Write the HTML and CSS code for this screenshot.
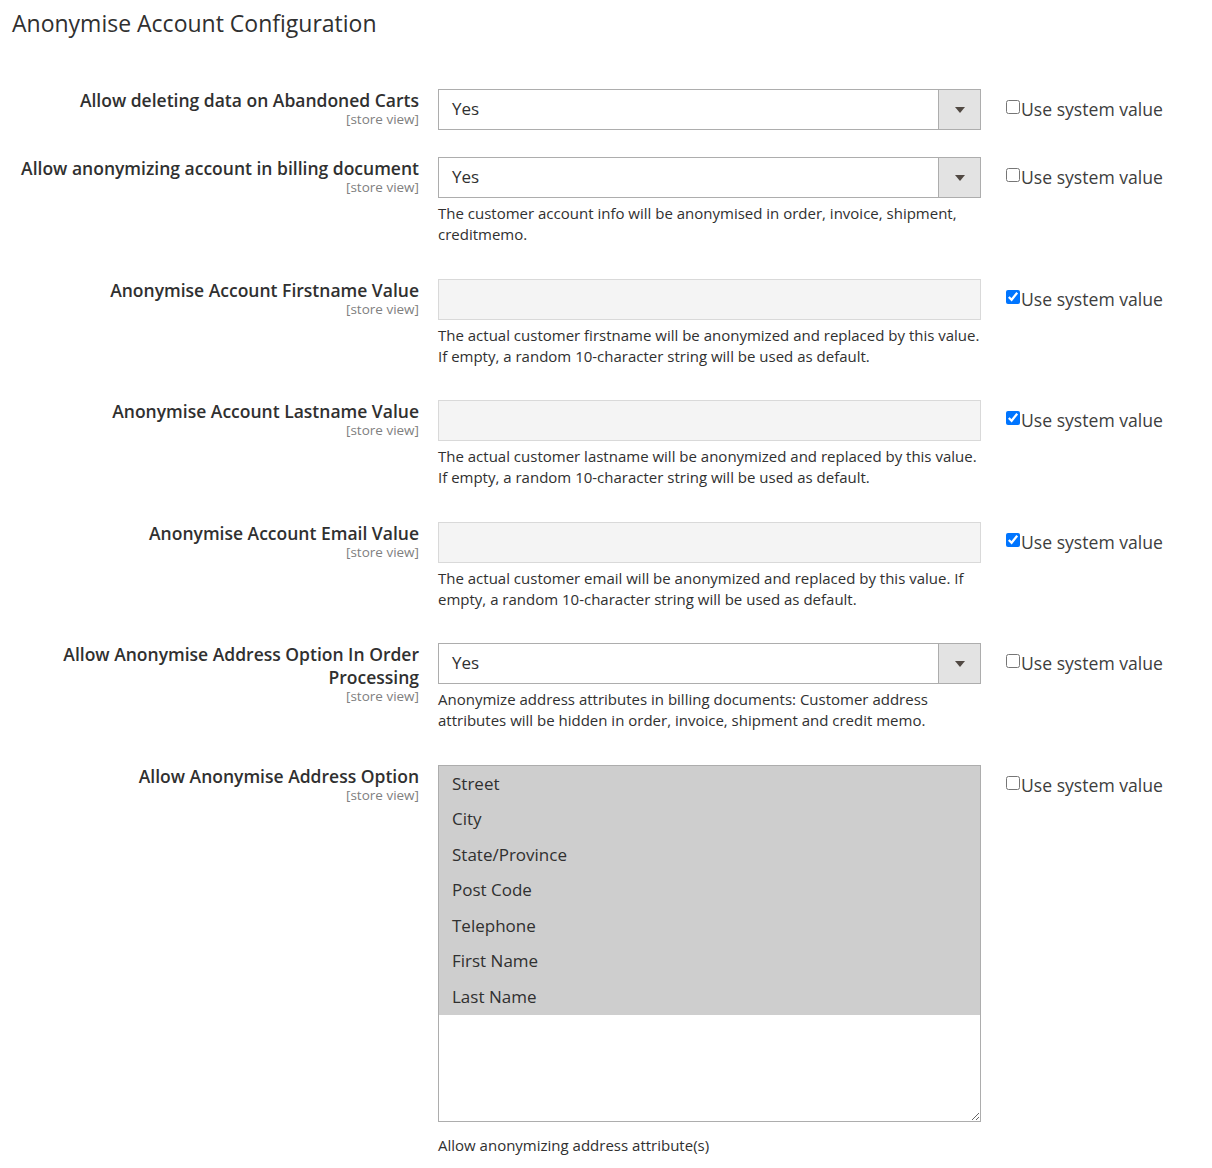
FILE: index.html
```html
<!DOCTYPE html>
<html lang="en">
<head>
  <meta charset="UTF-8" />
  <title>Anonymise Account Configuration</title>
  <link rel="stylesheet" href="styles.css">
</head>
<body>
  <div class="section">
    <h2 class="section-title">Anonymise Account Configuration</h2>

    <div class="row">
      <div class="label">
        <span>Allow deleting data on Abandoned Carts</span>
        <span class="scope">[store view]</span>
      </div>
      <div class="value">
        <div class="select"><span class="select-text">Yes</span><span class="select-arrow"></span></div>
      </div>
      <label class="use-default"><input type="checkbox" />Use system value</label>
    </div>

    <div class="row">
      <div class="label">
        <span>Allow anonymizing account in billing document</span>
        <span class="scope">[store view]</span>
      </div>
      <div class="value">
        <div class="select"><span class="select-text">Yes</span><span class="select-arrow"></span></div>
        <p class="note">The customer account info will be anonymised in order, invoice, shipment, creditmemo.</p>
      </div>
      <label class="use-default"><input type="checkbox" />Use system value</label>
    </div>

    <div class="row">
      <div class="label">
        <span>Anonymise Account Firstname Value</span>
        <span class="scope">[store view]</span>
      </div>
      <div class="value">
        <input class="text-input" type="text" disabled />
        <p class="note">The actual customer firstname will be anonymized and replaced by this value. If empty, a random 10-character string will be used as default.</p>
      </div>
      <label class="use-default"><input type="checkbox" checked />Use system value</label>
    </div>

    <div class="row">
      <div class="label">
        <span>Anonymise Account Lastname Value</span>
        <span class="scope">[store view]</span>
      </div>
      <div class="value">
        <input class="text-input" type="text" disabled />
        <p class="note">The actual customer lastname will be anonymized and replaced by this value. If empty, a random 10-character string will be used as default.</p>
      </div>
      <label class="use-default"><input type="checkbox" checked />Use system value</label>
    </div>

    <div class="row">
      <div class="label">
        <span>Anonymise Account Email Value</span>
        <span class="scope">[store view]</span>
      </div>
      <div class="value">
        <input class="text-input" type="text" disabled />
        <p class="note">The actual customer email will be anonymized and replaced by this value. If empty, a random 10-character string will be used as default.</p>
      </div>
      <label class="use-default"><input type="checkbox" checked />Use system value</label>
    </div>

    <div class="row">
      <div class="label">
        <span>Allow Anonymise Address Option In Order Processing</span>
        <span class="scope">[store view]</span>
      </div>
      <div class="value">
        <div class="select"><span class="select-text">Yes</span><span class="select-arrow"></span></div>
        <p class="note">Anonymize address attributes in billing documents: Customer address attributes will be hidden in order, invoice, shipment and credit memo.</p>
      </div>
      <label class="use-default"><input type="checkbox" />Use system value</label>
    </div>

    <div class="row">
      <div class="label">
        <span>Allow Anonymise Address Option</span>
        <span class="scope">[store view]</span>
      </div>
      <div class="value">
        <div class="multiselect">
          <div class="option selected">Street</div>
          <div class="option selected">City</div>
          <div class="option selected">State/Province</div>
          <div class="option selected">Post Code</div>
          <div class="option selected">Telephone</div>
          <div class="option selected">First Name</div>
          <div class="option selected">Last Name</div>
        </div>
        <p class="note note-wide">Allow anonymizing address attribute(s)</p>
      </div>
      <label class="use-default"><input type="checkbox" />Use system value</label>
    </div>
  </div>
</body>
</html>
```

FILE: styles.css
```css
body {
  margin: 0;
  font-family: 'Open Sans', 'Liberation Sans', sans-serif;
  color: #303030;
  background: #fff;
}
.section {
  padding: 0 0 10px;
}
.section-title {
  margin: 0 0 52px 12px;
  padding-top: 9px;
  font-size: 23px;
  font-weight: 400;
  line-height: 28px;
  color: #303030;
}
.row {
  display: grid;
  grid-template-columns: 438px 543px 1fr;
  padding-bottom: 27px;
}
.label {
  display: flex;
  flex-direction: column;
  align-items: flex-end;
  text-align: right;
  padding-right: 19px;
  font-size: 17.5px;
  font-weight: 600;
  line-height: 23px;
  color: #303030;
}
.label .scope {
  font-size: 13.5px;
  font-weight: 400;
  line-height: 15px;
  color: #808080;
}
.select {
  display: flex;
  height: 41px;
  box-sizing: border-box;
  border: 1px solid #adadad;
  background: #fff;
}
.select-text {
  flex: 1;
  padding-left: 13px;
  font-size: 17px;
  line-height: 37px;
}
.select-arrow {
  width: 41px;
  background: #e3e3e3;
  border-left: 1px solid #adadad;
  display: flex;
  align-items: center;
  justify-content: center;
}
.select-arrow::after {
  content: '';
  border-left: 5px solid transparent;
  border-right: 5px solid transparent;
  border-top: 6px solid #514943;
}
.text-input {
  display: block;
  width: 100%;
  height: 41px;
  box-sizing: border-box;
  margin: 0;
  border: 1px solid #d9d9d9;
  background: #f4f4f4;
}
.note {
  margin: 5px 0 6.5px;
  font-size: 15px;
  line-height: 21px;
  color: #303030;
}
.note-wide {
  margin-top: 13px;
}
.multiselect {
  height: 357px;
  box-sizing: border-box;
  border: 1px solid #adadad;
  background: #fff;
  overflow: auto;
  resize: vertical;
}
.option {
  height: 35.6px;
  padding-left: 13px;
  font-size: 17px;
  line-height: 35.6px;
}
.option.selected {
  background: #cecece;
}
.use-default {
  display: flex;
  align-items: flex-start;
  padding-left: 25px;
  padding-top: 8px;
  font-size: 17.6px;
  line-height: 24px;
  color: #3d3d3d;
}
.use-default input {
  width: 14px;
  height: 14px;
  margin: 3px 1px 0 0;
}
```
